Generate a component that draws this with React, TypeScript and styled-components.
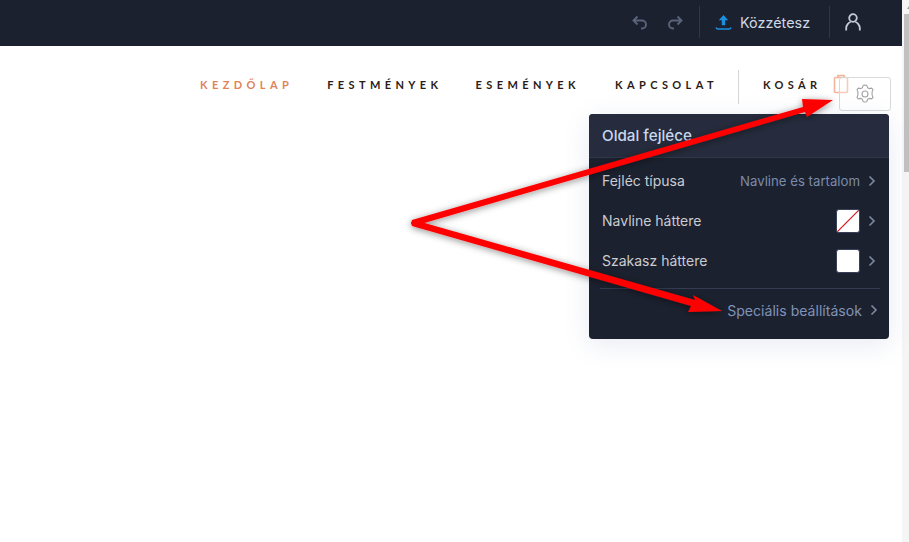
import React from "react";
import styled, { createGlobalStyle } from "styled-components";

const Global = createGlobalStyle`
  html, body { margin: 0; padding: 0; background: #fff; height: 100%; overflow: hidden; }
  #root { height: 100%; }
`;
const Page = styled.div`
  position: relative;
  width: 909px;
  height: 542px;
  overflow: hidden;
  display: flex;
  font-family: Inter, "Noto Sans", sans-serif;
`;
const Main = styled.div`
  flex: 1;
  min-width: 0;
  display: flex;
  flex-direction: column;
`;
const Scrollbar = styled.div`
  width: 7px;
  flex: none;
  background: #f5f5f5;
  display: flex;
  flex-direction: column;
  align-items: flex-end;
`;
const ScrollUp = styled.div`
  width: 0;
  height: 0;
  margin: 6px 0 5px;
  border-left: 2.5px solid transparent;
  border-bottom: 3px solid #a3a3a3;
`;
const Thumb = styled.div`
  width: 5px;
  height: 158px;
  background: #c1c1c1;
`;
const TopBar = styled.div`
  height: 46px;
  flex: none;
  box-sizing: border-box;
  padding-bottom: 2px;
  background: #1c212f;
  display: flex;
  align-items: center;
  justify-content: flex-end;
`;
const HistoryGroup = styled.div`
  display: flex;
  align-items: center;
  gap: 19px;
  padding-right: 16px;
`;
const BarAction = styled.div`
  height: 32px;
  border-left: 1px solid #2f3749;
  display: flex;
  align-items: center;
  box-sizing: border-box;
`;
const Publish = styled(BarAction)`
  width: 130px;
  padding-left: 15px;
  gap: 8px;
  color: #cfd8e6;
  font-size: 14.4px;
`;
const Account = styled(BarAction)`
  width: 73px;
  padding-left: 15px;
`;
const Nav = styled.nav`
  height: 50px;
  margin-top: 16px;
  flex: none;
  display: flex;
  align-items: center;
  padding-left: 200px;
  font-family: Lato, sans-serif;
`;
const NavLink = styled.a<{ $active?: boolean; $gap: number }>`
  font-size: 11px;
  font-weight: 700;
  letter-spacing: 4.4px;
  padding-bottom: 6px;
  color: ${(p) => (p.$active ? "#e0835a" : "#2b1c17")};
  margin-right: ${(p) => p.$gap}px;
  white-space: nowrap;
`;
const NavDivider = styled.div`
  width: 1px;
  height: 34px;
  background: #d5d5d5;
  margin-right: 24px;
`;
const CartIcon = styled.svg`
  width: 16px;
  height: 20px;
  margin-top: -7px;
  margin-left: -1px;
  flex: none;
`;
const GearButton = styled.div`
  position: absolute;
  left: 839px;
  top: 77px;
  width: 50px;
  height: 32px;
  border: 1px solid #d9d9d9;
  border-radius: 3px;
  background: rgba(255, 255, 255, 0.3);
  display: flex;
  align-items: center;
  justify-content: center;
`;
const Panel = styled.div`
  position: absolute;
  left: 589px;
  top: 114px;
  width: 300px;
  height: 225px;
  border-radius: 4px;
  background: #1c212f;
  box-shadow: 0 6px 26px rgba(90, 110, 170, 0.14);
  overflow: hidden;
`;
const PanelHeader = styled.div`
  height: 43px;
  background: #262c3d;
  border-bottom: 1px solid #2f3749;
  color: #c9d8ef;
  font-size: 15.2px;
  font-weight: 500;
  display: flex;
  align-items: center;
  padding-left: 13px;
`;
const Rows = styled.div`
  padding-top: 3px;
`;
const Row = styled.div`
  height: 40px;
  display: flex;
  align-items: center;
  padding: 0 13px 0 13px;
  color: #c9ccd1;
  font-size: 14px;
`;
const RowLabel = styled.span`
  flex: 1;
  padding-bottom: 2px;
`;
const RowValue = styled.span`
  color: #7b8bab;
  font-size: 13.2px;
  margin-right: 8px;
`;
const Swatch = styled.div`
  width: 24px;
  height: 24px;
  box-sizing: border-box;
  border-radius: 3px;
  background: #fff;
  border: 1px solid #39415a;
  margin-right: 8px;
  overflow: hidden;
  display: flex;
`;
const SlashIcon = styled.svg`
  width: 100%;
  height: 100%;
  display: block;
`;
const Separator = styled.div`
  height: 1px;
  background: #343b52;
  margin: 7px 9px 0 11px;
`;
const Advanced = styled.div`
  height: 42px;
  display: flex;
  align-items: center;
  justify-content: flex-end;
  padding-right: 11px;
  color: #7f93b8;
  font-size: 14.1px;
  gap: 8px;
`;
const Arrows = styled.svg`
  position: absolute;
  left: 0;
  top: 0;
  pointer-events: none;
`;

const Chevron = () => (
  <svg width="8" height="12" viewBox="0 0 8 12" fill="none">
    <path d="M1.500 1.500 6 6l-4.500 4.500" stroke="#7b879f" strokeWidth="1.700" />
  </svg>
);

export default function App() {
  return (
    <>
      <Global />
      <Page>
        <Main>
          <TopBar>
            <HistoryGroup>
              <svg width="16" height="15" viewBox="0 0 16 15" fill="none" stroke="#59637a" strokeWidth="1.900">
                <path d="M5.500 1.500 1.500 5.500l4 4M2 5.500h8a4 4 0 0 1 4 4 4 4 0 0 1-4 4H9" />
              </svg>
              <svg width="16" height="15" viewBox="0 0 16 15" fill="none" stroke="#59637a" strokeWidth="1.900">
                <path d="M10.500 1.500l4 4-4 4M14 5.500H6a4 4 0 0 0-4 4 4 4 0 0 0 4 4h1" />
              </svg>
            </HistoryGroup>
            <Publish>
              <svg width="17" height="16" viewBox="0 0 17 16" fill="none">
                <path d="M8.500 1 3.800 6.200h3v5h3.400v-5h3z" fill="#1b8fe0" />
                <path d="M1 13.500c.3 1 1 1.400 2 1.400h11c1 0 1.700-.4 2-1.400" stroke="#1b8fe0" strokeWidth="1.500" />
              </svg>
              Közzétesz
            </Publish>
            <Account>
              <svg width="16" height="18" viewBox="0 0 16 18" fill="none" stroke="#c3cbd8" strokeWidth="1.800">
                <circle cx="8" cy="5" r="3.800" />
                <path d="M1.200 17.500V15c0-3 2.500-5.500 4.500-6M14.800 17.500V15c0-3-2.500-5.500-4.500-6" />
              </svg>
            </Account>
          </TopBar>
          <Nav>
            <NavLink $active $gap={34}>KEZDŐLAP</NavLink>
            <NavLink $gap={33}>FESTMÉNYEK</NavLink>
            <NavLink $gap={35}>ESEMÉNYEK</NavLink>
            <NavLink $gap={20}>KAPCSOLAT</NavLink>
            <NavDivider />
            <NavLink $gap={12}>KOSÁR</NavLink>
            <CartIcon viewBox="0 0 16 20" fill="none" stroke="#f3b59b" strokeWidth="1.600">
              <rect x="1.500" y="3.500" width="13" height="15" rx="1" />
              <path d="M5 3.500V1.500h6v2" />
            </CartIcon>
          </Nav>
        </Main>
        <Scrollbar>
          <ScrollUp />
          <Thumb />
        </Scrollbar>
        <GearButton>
          <svg width="24" height="24" viewBox="0 0 24 24" fill="none" stroke="#a3a3a3" strokeWidth="1.100" strokeLinejoin="round">
            <path d="M12 3l1.800.3.800 2.400 1.600.9 2.500-.5 1.300 1.500-.9 2.300v3.200l.9 2.300-1.300 1.500-2.500-.5-1.600.9-.8 2.400-1.800.3-1.800-.3-.8-2.400-1.600-.9-2.500.5-1.300-1.500.9-2.300v-3.200l-.9-2.300 1.300-1.500 2.500.5 1.600-.9.8-2.400z" />
            <circle cx="12" cy="12" r="3" />
          </svg>
        </GearButton>
        <Panel>
          <PanelHeader>Oldal fejléce</PanelHeader>
          <Rows>
            <Row>
              <RowLabel>Fejléc típusa</RowLabel>
              <RowValue>Navline és tartalom</RowValue>
              <Chevron />
            </Row>
            <Row>
              <RowLabel>Navline háttere</RowLabel>
              <Swatch>
                <SlashIcon viewBox="0 0 22 22">
                  <path d="M0 22 22 0" stroke="#d8141c" strokeWidth="1.200" />
                </SlashIcon>
              </Swatch>
              <Chevron />
            </Row>
            <Row>
              <RowLabel>Szakasz háttere</RowLabel>
              <Swatch />
              <Chevron />
            </Row>
          </Rows>
          <Separator />
          <Advanced>
            Speciális beállítások
            <Chevron />
          </Advanced>
        </Panel>
        <Arrows width="909" height="542" viewBox="0 0 909 542">
          <defs>
            <filter id="sh" x="-20%" y="-40%" width="140%" height="180%">
              <feDropShadow dx="0" dy="1.500" stdDeviation="3.500" floodColor="#000" floodOpacity="0.45" />
            </filter>
          </defs>
          <g filter="url(#sh)" fill="#fe0000">
            <polygon points="411,223 412,220 803,107 802,99 833,100 807,117 805,112 414,226" />
            <polygon points="411,223 414,220 695,300 693,295 722,311 688,312 691,306 412,226" />
          </g>
        </Arrows>
      </Page>
    </>
  );
}
